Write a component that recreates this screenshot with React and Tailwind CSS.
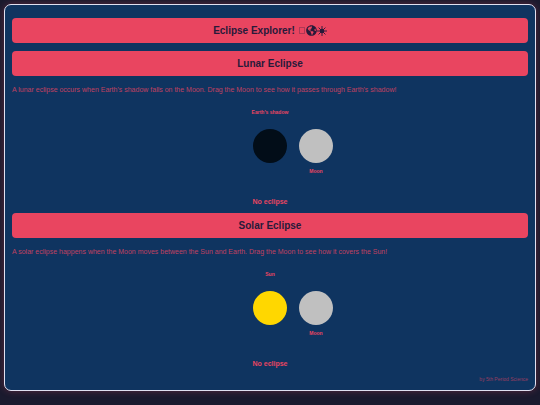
import React, { useRef, useState } from 'react';
import { FaGlobeAmericas } from 'react-icons/fa';

const START_X = 46;

const SunIcon = () => (
  <svg viewBox="0 0 16 16" className="h-[10px] w-[10px]" fill="currentColor" stroke="currentColor" aria-hidden="true">
    <circle cx="8" cy="8" r="3.6" stroke="none" />
    <path strokeWidth="1.5" d="M8 0v16M0 8h16M2.5 2.5l11 11M13.5 2.5l-11 11" />
  </svg>
);

const Heading = ({ as: Tag = 'h2', children }) => (
  <Tag className="flex h-[25px] items-center justify-center rounded-[4px] bg-[#e94560] text-[10px] leading-3 font-bold text-[#271a3a]">
    {children}
  </Tag>
);

const EclipseStage = ({ bodyLabel, bodyColor, eclipseName }) => {
  const [pos, setPos] = useState({ x: START_X, y: 0 });
  const grab = useRef(null);

  const handleDown = (e) => {
    e.currentTarget.setPointerCapture(e.pointerId);
    grab.current = { x: e.clientX - pos.x, y: e.clientY - pos.y };
  };

  const handleMove = (e) => {
    if (!grab.current) return;
    setPos({ x: e.clientX - grab.current.x, y: e.clientY - grab.current.y });
  };

  const handleUp = () => {
    grab.current = null;
  };

  const distance = Math.hypot(pos.x, pos.y);
  let status = 'No eclipse';
  if (distance < 4) {
    status = `Total ${eclipseName} eclipse`;
  } else if (distance < 34) {
    status = `Partial ${eclipseName} eclipse`;
  }

  return (
    <>
      <div className="mt-2 flex h-[88px] items-center justify-center">
        <div className="relative h-[34px] w-[34px]">
          <span className="absolute bottom-full left-1/2 mb-[13px] -translate-x-1/2 text-[5px] leading-[8px] font-bold whitespace-nowrap">
            {bodyLabel}
          </span>
          <div className={`h-[34px] w-[34px] rounded-full ${bodyColor}`} />
          <div
            className="absolute top-0 left-0 h-[34px] w-[34px] cursor-grab touch-none rounded-full bg-[#c0c0c0]"
            style={{ transform: `translate(${pos.x}px, ${pos.y}px)` }}
            onPointerDown={handleDown}
            onPointerMove={handleMove}
            onPointerUp={handleUp}
          >
            <span className="absolute top-full left-1/2 mt-1 -translate-x-1/2 text-[5px] leading-[8px] font-bold">
              Moon
            </span>
          </div>
        </div>
      </div>
      <p className="mt-2 text-center text-[7px] leading-[8px] font-bold">{status}</p>
    </>
  );
};

const App = () => {
  return (
    <div className="min-h-screen bg-[#1a1a2e] p-1 font-['Liberation_Sans',Arial,sans-serif] text-[#e94560]">
      <main className="rounded-[7px] border border-[#e0e0f0] bg-[#0f3460] px-[7px] pt-[13px] pb-[7px] shadow-[0_0_7px_#e945604d]">
        <Heading as="h1">
          Eclipse Explorer!
          <span className="ml-1 h-[7px] w-[6px] border border-[#271a3a]/30" />
          <FaGlobeAmericas className="ml-px h-[11px] w-[11px]" />
          <SunIcon />
        </Heading>

        {/* Lunar */}
        <section className="mt-2">
          <Heading>Lunar Eclipse</Heading>
          <p className="mt-[10px] text-[7px] leading-[8px] text-[#e94560]/80">
            A lunar eclipse occurs when Earth's shadow falls on the Moon. Drag the Moon to see how it passes through Earth's shadow!
          </p>
          <EclipseStage bodyLabel="Earth's shadow" bodyColor="bg-[#020d18]" eclipseName="lunar" />
        </section>

        {/* Solar */}
        <section className="mt-[7px]">
          <Heading>Solar Eclipse</Heading>
          <p className="mt-[10px] text-[7px] leading-[8px] text-[#e94560]/80">
            A solar eclipse happens when the Moon moves between the Sun and Earth. Drag the Moon to see how it covers the Sun!
          </p>
          <EclipseStage bodyLabel="Sun" bodyColor="bg-[#ffd700]" eclipseName="solar" />
        </section>

        <footer className="mt-[7px] text-right text-[5px] leading-[8px] text-[#e94560]/60">by 5th Period Science</footer>
      </main>
    </div>
  );
};

export default App;
